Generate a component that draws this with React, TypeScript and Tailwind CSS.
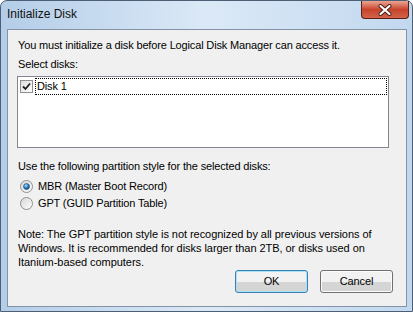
import React from 'react';

function CheckBox() {
    return (
        <div className="w-[13px] h-[13px] border border-[#8f8f8f] bg-gradient-to-br from-[#dcdcdc] to-white p-[1px] flex items-center justify-center">
            <svg width="9" height="9" viewBox="0 0 9 9">
                <path d="M1 4.5 L3.5 7 L8 1.5" fill="none" stroke="#1f1f1f" strokeWidth="1.8" />
            </svg>
        </div>
    );
}

function Radio({ checked }: { checked: boolean }) {
    return (
        <svg width="13" height="13" viewBox="0 0 13 13">
            <defs>
                <linearGradient id="rb" x1="0" y1="0" x2="1" y2="1">
                    <stop offset="0" stopColor="#d6d6d6" />
                    <stop offset="1" stopColor="#ffffff" />
                </linearGradient>
                <radialGradient id="rd" cx="0.4" cy="0.35" r="0.7">
                    <stop offset="0" stopColor="#bde4ff" />
                    <stop offset="0.5" stopColor="#2c84c8" />
                    <stop offset="1" stopColor="#0d3a66" />
                </radialGradient>
            </defs>
            <circle cx="6.5" cy="6.5" r="6" fill="url(#rb)" stroke="#8e8f8f" strokeWidth="1" />
            {checked && <circle cx="6.5" cy="6.5" r="3" fill="url(#rd)" stroke="#1a4f7f" strokeWidth="0.6" />}
        </svg>
    );
}

function CloseButton() {
    return (
        <div className="w-[48px] h-[18px] mr-[3px] rounded-b-[4px] border border-t-0 border-[#5a1f18] bg-gradient-to-b from-[#e8a493] via-[#c8432c] to-[#d1644a] flex items-center justify-center">
            <svg width="14" height="12" viewBox="0 0 14 12">
                <path d="M2.5 2 L11.5 10 M11.5 2 L2.5 10" stroke="#4a1b14" strokeWidth="4" strokeLinecap="round" />
                <path d="M2.5 2 L11.5 10 M11.5 2 L2.5 10" stroke="#ffffff" strokeWidth="2.2" strokeLinecap="round" />
            </svg>
        </div>
    );
}

function Button({ label, primary }: { label: string; primary?: boolean }) {
    return (
        <div
            className={`w-[73px] h-[23px] rounded-[3px] border flex items-center justify-center bg-gradient-to-b from-[#f2f2f2] from-50% to-[#d5d5d5] to-50% text-black ${
                primary ? 'border-[#3c7fb1] shadow-[inset_0_0_0_1px_#a6e3f8]' : 'border-[#707070] shadow-[inset_0_0_0_1px_#fcfcfc]'
            }`}
        >
            {label}
        </div>
    );
}

export default function App() {
    return (
        <div
            className="w-[413px] h-[312px] flex flex-col rounded-t-[7px] border border-[#4d5f75] bg-gradient-to-r from-[#b4cde8] via-[#dbe9f7] to-[#c2d8ef] text-[11px] tracking-[-0.15px] text-black"
            style={{ fontFamily: '"Liberation Sans", Arial, sans-serif' }}
        >
            <div className="h-[28px] flex items-start">
                <span className="pl-[6px] pt-[6px] leading-[15px] text-[12px] tracking-normal text-[#111]">Initialize Disk</span>
                <div className="ml-auto">
                    <CloseButton />
                </div>
            </div>
            <div className="flex-1 ml-[6px] mr-[5px] mb-[4px] border border-[#8393a6] bg-[#f0f0f0] flex flex-col pt-[8px] pl-[9px] pr-[13px] leading-[15px]">
                <p className="pl-[1px]">You must initialize a disk before Logical Disk Manager can access it.</p>
                <p className="pl-[1px] mt-[4px]">Select disks:</p>
                <div className="mt-[4px] w-[372px] h-[72px] border border-[#828790] bg-white p-[1px]">
                    <div className="flex items-center h-[17px]">
                        <div className="pl-[1px] pr-[2px]">
                            <CheckBox />
                        </div>
                        <div className="flex-1 h-[17px] border border-dotted border-black pl-[1px] leading-[15px]">Disk 1</div>
                    </div>
                </div>
                <p className="pl-[1px] mt-[11px]">Use the following partition style for the selected disks:</p>
                <div className="mt-[5px] flex flex-col gap-[2px] pl-[3px]">
                    <div className="flex items-center gap-[5px] h-[15px]">
                        <Radio checked />
                        <span>MBR (Master Boot Record)</span>
                    </div>
                    <div className="flex items-center gap-[5px] h-[15px]">
                        <Radio checked={false} />
                        <span>GPT (GUID Partition Table)</span>
                    </div>
                </div>
                <p className="pl-[1px] mt-[16px] leading-[14px] whitespace-nowrap tracking-[-0.05px]">
                    Note: The GPT partition style is not recognized by all previous versions of
                    <br />
                    Windows. It is recommended for disks larger than 2TB, or disks used on
                    <br />
                    Itanium-based computers.
                </p>
                <div className="mt-[1px] flex justify-end gap-[12px]">
                    <Button label="OK" primary />
                    <Button label="Cancel" />
                </div>
            </div>
        </div>
    );
}
